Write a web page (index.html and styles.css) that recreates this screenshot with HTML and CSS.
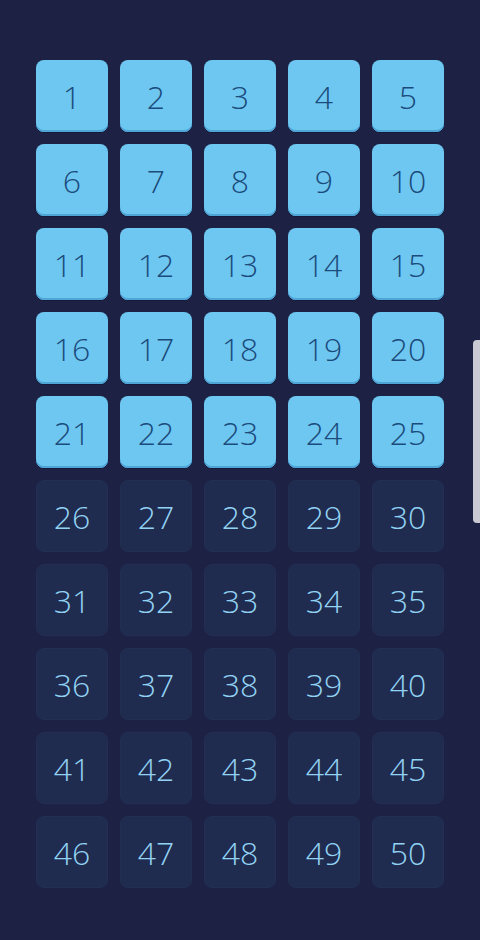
FILE: index.html
```html
<!DOCTYPE html>
<html lang="en">
<head>
  <meta charset="UTF-8" />
  <meta name="viewport" content="width=device-width, initial-scale=1.0" />
  <title>Levels</title>
  <link rel="stylesheet" href="styles.css">
</head>
<body>
  <div class="levels" id="levels"></div>
  <div class="scrollbar"></div>

  <script>
    const levels = document.getElementById('levels');
    const unlocked = 25;
    for (let i = 1; i <= 50; i++) {
      const tile = document.createElement('div');
      tile.className = i <= unlocked ? 'tile open' : 'tile locked';
      tile.textContent = i;
      levels.appendChild(tile);
    }
  </script>
</body>
</html>
```

FILE: styles.css
```css
html, body {
  margin: 0;
  height: 100%;
}
body {
  background: #1d2143;
  font-family: 'Open Sans', 'Noto Sans', sans-serif;
  overflow: hidden;
}
.levels {
  display: grid;
  grid-template-columns: repeat(5, 72px);
  grid-auto-rows: 72px;
  gap: 12px;
  padding: 60px 0 0 36px;
}
.tile {
  display: flex;
  align-items: center;
  justify-content: center;
  border-radius: 8px;
  font-size: 32px;
  font-weight: 300;
  box-sizing: border-box;
}
.tile.open {
  background: #6ec7f1;
  color: #1b4b7c;
  box-shadow: inset 0 -2px 0 #4ea4d4, 0 1px 0 #17193a;
}
.tile.locked {
  background: #1f2b4f;
  color: #92d2f3;
  border: 1px solid #222f55;
}
.scrollbar {
  position: absolute;
  top: 340px;
  right: 0;
  width: 7px;
  height: 183px;
  background: #c9c9d3;
  border-radius: 4px 0 0 4px;
}
```
